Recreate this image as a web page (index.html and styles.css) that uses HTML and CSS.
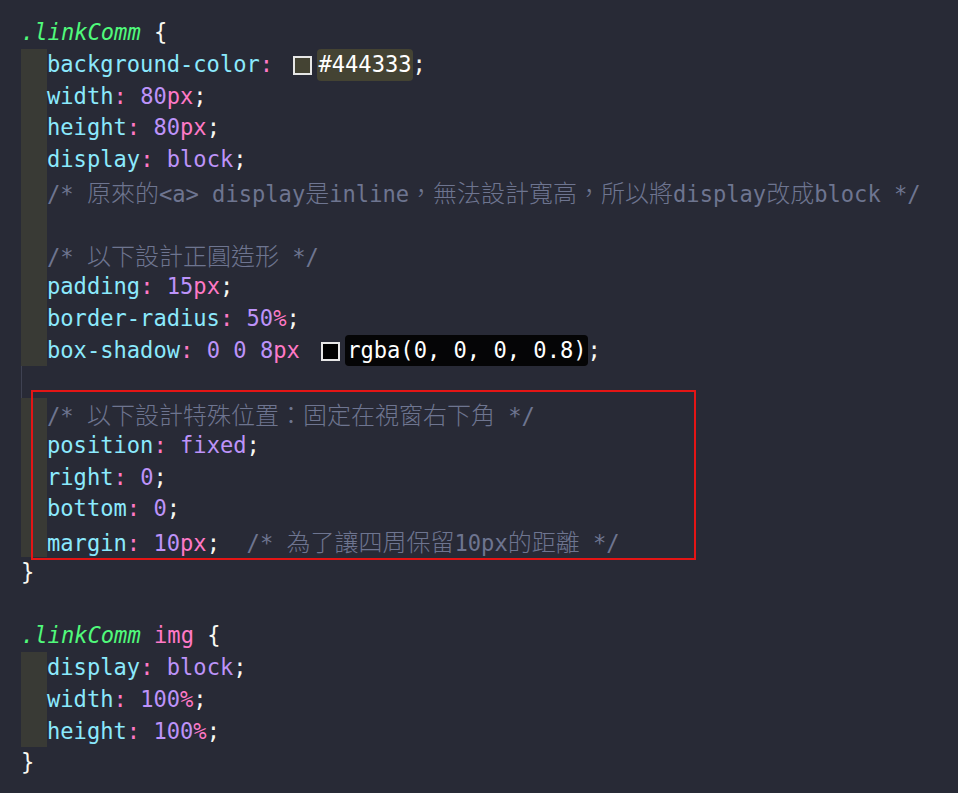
FILE: index.html
```html
<!DOCTYPE html>
<html lang="zh-Hant">
<head>
<meta charset="utf-8">
<title>linkComm CSS</title>
<link rel="stylesheet" href="styles.css">
</head>
<body>
<div class="editor">
  <div class="line"><span class="sel">.linkComm</span> <span class="br">{</span></div>
  <div class="line"><span class="ind"></span><span class="prop">background-color</span><span class="pk">:</span> <span class="sw sw-olive"></span><span class="hl hl-olive">#444333</span><span class="pn">;</span></div>
  <div class="line"><span class="ind"></span><span class="prop">width</span><span class="pk">:</span> <span class="num">80</span><span class="pk">px</span><span class="pn">;</span></div>
  <div class="line"><span class="ind"></span><span class="prop">height</span><span class="pk">:</span> <span class="num">80</span><span class="pk">px</span><span class="pn">;</span></div>
  <div class="line"><span class="ind"></span><span class="prop">display</span><span class="pk">:</span> <span class="num">block</span><span class="pn">;</span></div>
  <div class="line"><span class="ind"></span><span class="cm">/* <span class="cjk">原來的</span>&lt;a&gt; display<span class="cjk">是</span>inline<span class="cjk">，無法設計寬高，所以將</span>display<span class="cjk">改成</span>block */</span></div>
  <div class="line"><span class="ind"></span></div>
  <div class="line"><span class="ind"></span><span class="cm">/* <span class="cjk">以下設計正圓造形</span> */</span></div>
  <div class="line"><span class="ind"></span><span class="prop">padding</span><span class="pk">:</span> <span class="num">15</span><span class="pk">px</span><span class="pn">;</span></div>
  <div class="line"><span class="ind"></span><span class="prop">border-radius</span><span class="pk">:</span> <span class="num">50</span><span class="pk">%</span><span class="pn">;</span></div>
  <div class="line"><span class="ind"></span><span class="prop">box-shadow</span><span class="pk">:</span> <span class="num">0</span> <span class="num">0</span> <span class="num">8</span><span class="pk">px</span> <span class="sw sw-black"></span><span class="hl hl-black">rgba(0, 0, 0, 0.8)</span><span class="pn">;</span></div>
  <div class="line"><span class="guide"></span></div>
  <div class="line"><span class="ind"></span><span class="cm">/* <span class="cjk">以下設計特殊位置：固定在視窗右下角</span> */</span></div>
  <div class="line"><span class="ind"></span><span class="prop">position</span><span class="pk">:</span> <span class="num">fixed</span><span class="pn">;</span></div>
  <div class="line"><span class="ind"></span><span class="prop">right</span><span class="pk">:</span> <span class="num">0</span><span class="pn">;</span></div>
  <div class="line"><span class="ind"></span><span class="prop">bottom</span><span class="pk">:</span> <span class="num">0</span><span class="pn">;</span></div>
  <div class="line"><span class="ind"></span><span class="prop">margin</span><span class="pk">:</span> <span class="num">10</span><span class="pk">px</span><span class="pn">;</span>  <span class="cm">/* <span class="cjk">為了讓四周保留</span>10px<span class="cjk">的距離</span> */</span></div>
  <div class="line"><span class="br">}</span></div>
  <div class="line"></div>
  <div class="line"><span class="sel">.linkComm</span> <span class="tag">img</span> <span class="br">{</span></div>
  <div class="line"><span class="ind"></span><span class="prop">display</span><span class="pk">:</span> <span class="num">block</span><span class="pn">;</span></div>
  <div class="line"><span class="ind"></span><span class="prop">width</span><span class="pk">:</span> <span class="num">100</span><span class="pk">%</span><span class="pn">;</span></div>
  <div class="line"><span class="ind"></span><span class="prop">height</span><span class="pk">:</span> <span class="num">100</span><span class="pk">%</span><span class="pn">;</span></div>
  <div class="line"><span class="br">}</span></div>
  <div class="mark"></div>
</div>
</body>
</html>
```
FILE: styles.css
```css
html, body {
  margin: 0;
  padding: 0;
  background: #282a36;
}

.editor {
  position: relative;
  width: 958px;
  height: 793px;
  box-sizing: border-box;
  padding: 17px 0 0 21px;
  background: #282a36;
  font-family: "DejaVu Sans Mono", "Liberation Mono", "Noto Sans CJK TC", monospace;
  font-size: 22.1px;
  color: #f8f8f2;
  overflow: hidden;
}

.line {
  height: 31.75px;
  line-height: 31.75px;
  white-space: pre;
}

.ind {
  display: inline-block;
  width: 26px;
  height: 31.75px;
  vertical-align: top;
  background: #393a35;
}

.guide {
  display: inline-block;
  width: 1px;
  height: 31.75px;
  vertical-align: top;
  background: #3f4252;
}

.sel {
  color: #50fa7b;
  font-style: italic;
}

.tag { color: #ff79c6; }
.br { color: #f8f8f2; }
.prop { color: #8be9fd; }
.pk { color: #ff79c6; }
.num { color: #bd93f9; }
.pn { color: #f8f8f2; }

.cm {
  color: #6e7590;
}

.cjk {
  font-family: "Noto Sans CJK TC", "Noto Sans CJK SC", sans-serif;
  font-size: 24px;
  line-height: 31.75px;
  font-weight: 300;
}

.sw {
  display: inline-block;
  box-sizing: border-box;
  width: 19px;
  height: 19px;
  border: 2px solid #e6e6e6;
  vertical-align: -3px;
  margin: 0 5px 0 7px;
}

.sw-olive { background: #444333; }
.sw-black { background: #000000; margin-left: 8px; }

.hl {
  display: inline-block;
  color: #ffffff;
  border-radius: 4px;
}

.hl-olive {
  background: #444333;
  padding: 0 1px;
}

.hl-black {
  background: #050506;
  padding: 0 1px 0 2px;
}

.mark {
  position: absolute;
  left: 31px;
  top: 390px;
  width: 665px;
  height: 170px;
  box-sizing: border-box;
  border: 2px solid #e31515;
}
```
